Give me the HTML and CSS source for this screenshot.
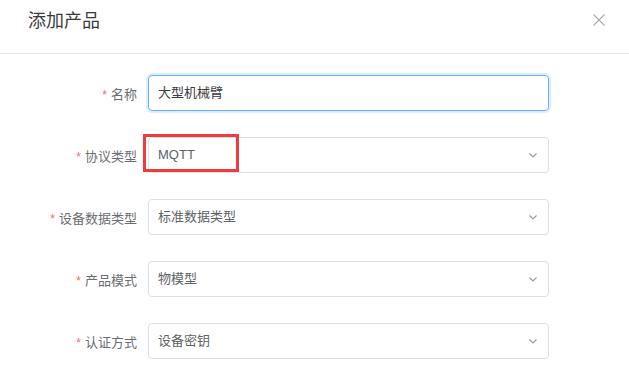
FILE: index.html
```html
<!DOCTYPE html>
<html>
<head>
<meta charset="utf-8">
<title>添加产品</title>
<link rel="stylesheet" href="styles.css">
</head>
<body>
	<div class="dialog">
		<div class="dialog_hd">
			<span class="dialog_title">添加产品</span>
			<span class="dialog_close">
				<svg width="12" height="12" viewBox="0 0 12 12"><path d="M0.5 0.5 L11.5 11.5 M11.5 0.5 L0.5 11.5" stroke="#a8abb2" stroke-width="1.1" fill="none"/></svg>
			</span>
		</div>

		<div class="dialog_bd">
			<div class="form_row">
				<label class="form_label"><i>*</i>名称</label>
				<div class="form_ctrl input focus">大型机械臂</div>
			</div>
			<div class="form_row">
				<label class="form_label"><i>*</i>协议类型</label>
				<div class="form_ctrl select">
					<span class="val">MQTT</span>
					<svg class="arrow" width="8" height="5" viewBox="0 0 8 5"><path d="M0.5 0.5 L4 4 L7.5 0.5" stroke="#9a9da6" stroke-width="1.2" fill="none"/></svg>
					<span class="mark"></span>
				</div>
			</div>
			<div class="form_row">
				<label class="form_label"><i>*</i>设备数据类型</label>
				<div class="form_ctrl select">
					<span class="val">标准数据类型</span>
					<svg class="arrow" width="8" height="5" viewBox="0 0 8 5"><path d="M0.5 0.5 L4 4 L7.5 0.5" stroke="#9a9da6" stroke-width="1.2" fill="none"/></svg>
				</div>
			</div>
			<div class="form_row">
				<label class="form_label"><i>*</i>产品模式</label>
				<div class="form_ctrl select">
					<span class="val">物模型</span>
					<svg class="arrow" width="8" height="5" viewBox="0 0 8 5"><path d="M0.5 0.5 L4 4 L7.5 0.5" stroke="#9a9da6" stroke-width="1.2" fill="none"/></svg>
				</div>
			</div>
			<div class="form_row">
				<label class="form_label"><i>*</i>认证方式</label>
				<div class="form_ctrl select">
					<span class="val">设备密钥</span>
					<svg class="arrow" width="8" height="5" viewBox="0 0 8 5"><path d="M0.5 0.5 L4 4 L7.5 0.5" stroke="#9a9da6" stroke-width="1.2" fill="none"/></svg>
				</div>
			</div>
		</div>
	</div>
</body>
</html>
```

FILE: styles.css
```css
*{margin:0; padding:0; box-sizing:border-box;}
body{background:#fff; font-family:"Liberation Sans","Noto Sans CJK SC",sans-serif; color:#333;}
.dialog{width:629px; height:373px; overflow:hidden; position:relative;}

/*头部*/
.dialog_hd{height:54px; padding:9px 28px 0; border-bottom:1px solid #e8e8e8; position:relative;}
.dialog_title{font-size:18px; line-height:24px; color:#3a3a3a;}
.dialog_close{position:absolute; top:14px; right:24px; width:12px; height:12px; display:block;}
.dialog_close svg{display:block;}

/*表单*/
.dialog_bd{padding-top:21px;}
.form_row{display:flex; align-items:center; height:36px; margin-bottom:26px;}
.form_label{width:148px; padding-right:11px; text-align:right; font-size:13px; color:#6b6d72;}
.form_label i{font-style:normal; font-size:12px; color:#f56c6c; margin-right:4px;}
.form_ctrl{width:401px; height:36px; border:1px solid #dcdfe6; border-radius:4px; padding:0 9px; font-size:13px; line-height:34px; color:#606266; position:relative;}
.form_ctrl.focus{border-color:#66b1ff; box-shadow:0 0 0 2px rgba(64,158,255,.18); color:#3c3c3c;}
.select .arrow{position:absolute; right:11px; top:15px; display:block;}
.select .mark{position:absolute; left:-6px; top:-4px; width:96px; height:38px; border:3px solid #ef3b3b;}
```
